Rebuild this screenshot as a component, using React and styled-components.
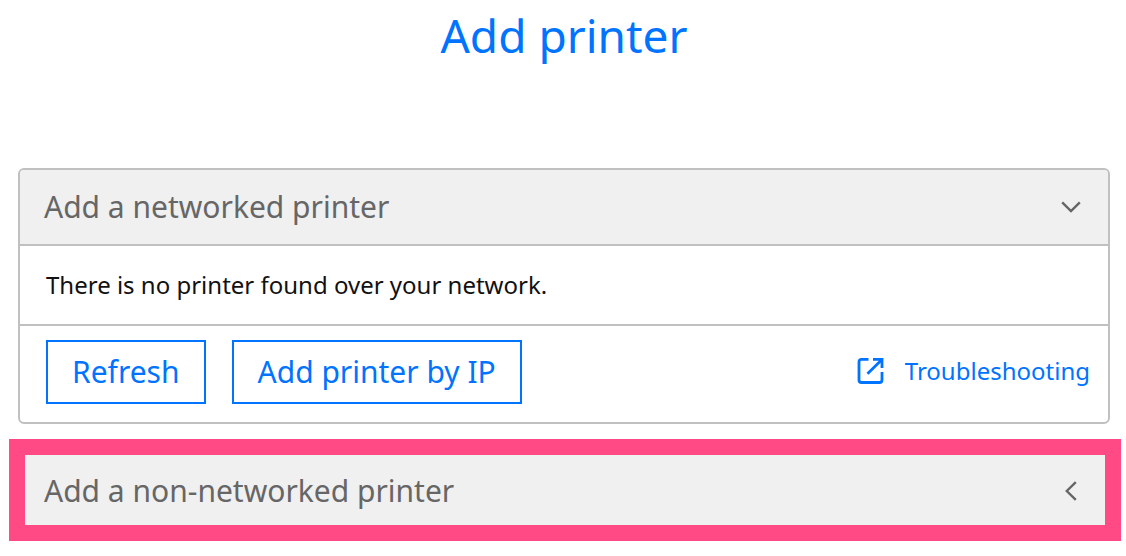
import React from "react";
import styled, { createGlobalStyle } from "styled-components";

const Global = createGlobalStyle`
  * { box-sizing: border-box; }
  body { margin: 0; background: #fff; font-family: "Noto Sans", sans-serif; color: #111; }
  button { font-family: inherit; cursor: pointer; }
`;

const Page = styled.main`
  padding: 0 5px 15px 9px;
`;

const Title = styled.h1`
  margin: 0 0 98px;
  padding: 3px 2px 3px 0;
  font-size: 46px;
  line-height: 64px;
  font-weight: 400;
  text-align: center;
  color: #0073ff;
`;

const Card = styled.section`
  margin: 0 11px 0 9px;
  border: 2px solid #c0c0c0;
  border-radius: 6px;
  overflow: hidden;
`;

const Toggle = styled.button`
  display: flex;
  width: 100%;
  align-items: center;
  justify-content: space-between;
  padding: ${(p) => (p.$compact ? "16px 28px 14px 19px" : "17px 27px 17px 24px")};
  border: 0;
  background: #f0f0f0;
  color: #666;
  font-size: 30px;
  line-height: 40px;
  text-align: left;
`;

const Message = styled.p`
  margin: 0;
  padding: 22px 26px;
  border: solid #c0c0c0;
  border-width: 2px 0;
  font-size: 24px;
  line-height: 34px;
`;

const Actions = styled.div`
  display: flex;
  flex-wrap: wrap;
  align-items: center;
  gap: 26px;
  padding: 14px 18px 18px 26px;
`;

const Action = styled.button`
  padding: 10px 24px;
  border: 2px solid #0073ff;
  background: #fff;
  color: #0073ff;
  font-size: 30px;
  line-height: 40px;
`;

const HelpLink = styled.a`
  display: flex;
  align-items: center;
  gap: 20px;
  margin-left: auto;
  padding-bottom: 2px;
  color: #0073ff;
  font-size: 24px;
  line-height: 34px;
  text-decoration: none;
`;

const Highlight = styled.section`
  margin-top: 15px;
  border: 16px solid #ff4a85;
`;

const Chevron = ({ left }) =>
  left ? (
    <svg width="12" height="20" viewBox="0 0 12 20" fill="none" stroke="#666" strokeWidth="2.4" aria-hidden="true">
      <path d="M10.800 1.200 1.800 10l9 8.800" />
    </svg>
  ) : (
    <svg width="20" height="12" viewBox="0 0 20 12" fill="none" stroke="#666" strokeWidth="2.4" aria-hidden="true">
      <path d="M1.200 1.300 10 10.100 18.800 1.300" />
    </svg>
  );

const External = () => (
  <svg width="28" height="28" viewBox="0 0 28 28" fill="none" stroke="currentColor" strokeWidth="2.800" aria-hidden="true">
    <path d="M11.500 2.400H4.500Q2 2.400 2 4.900V23Q2 25.500 4.500 25.500H22.500Q25 25.500 25 23V15M25 2.400 10.500 16.700" />
    <path d="M16 1H26.400V11H23.600V6L21.500 3.800H16Z" fill="currentColor" stroke="none" />
  </svg>
);

export default function App() {
  return (
    <>
      <Global />
      <Page>
        <Title>Add printer</Title>
        <Card>
          <Toggle type="button" aria-expanded="true">
            Add a networked printer
            <Chevron />
          </Toggle>
          <Message>There is no printer found over your network.</Message>
          <Actions>
            <Action type="button">Refresh</Action>
            <Action type="button">Add printer by IP</Action>
            <HelpLink href="#troubleshooting">
              <External />
              Troubleshooting
            </HelpLink>
          </Actions>
        </Card>
        <Highlight>
          <Toggle type="button" $compact aria-expanded="false">
            Add a non-networked printer
            <Chevron left />
          </Toggle>
        </Highlight>
      </Page>
    </>
  );
}
